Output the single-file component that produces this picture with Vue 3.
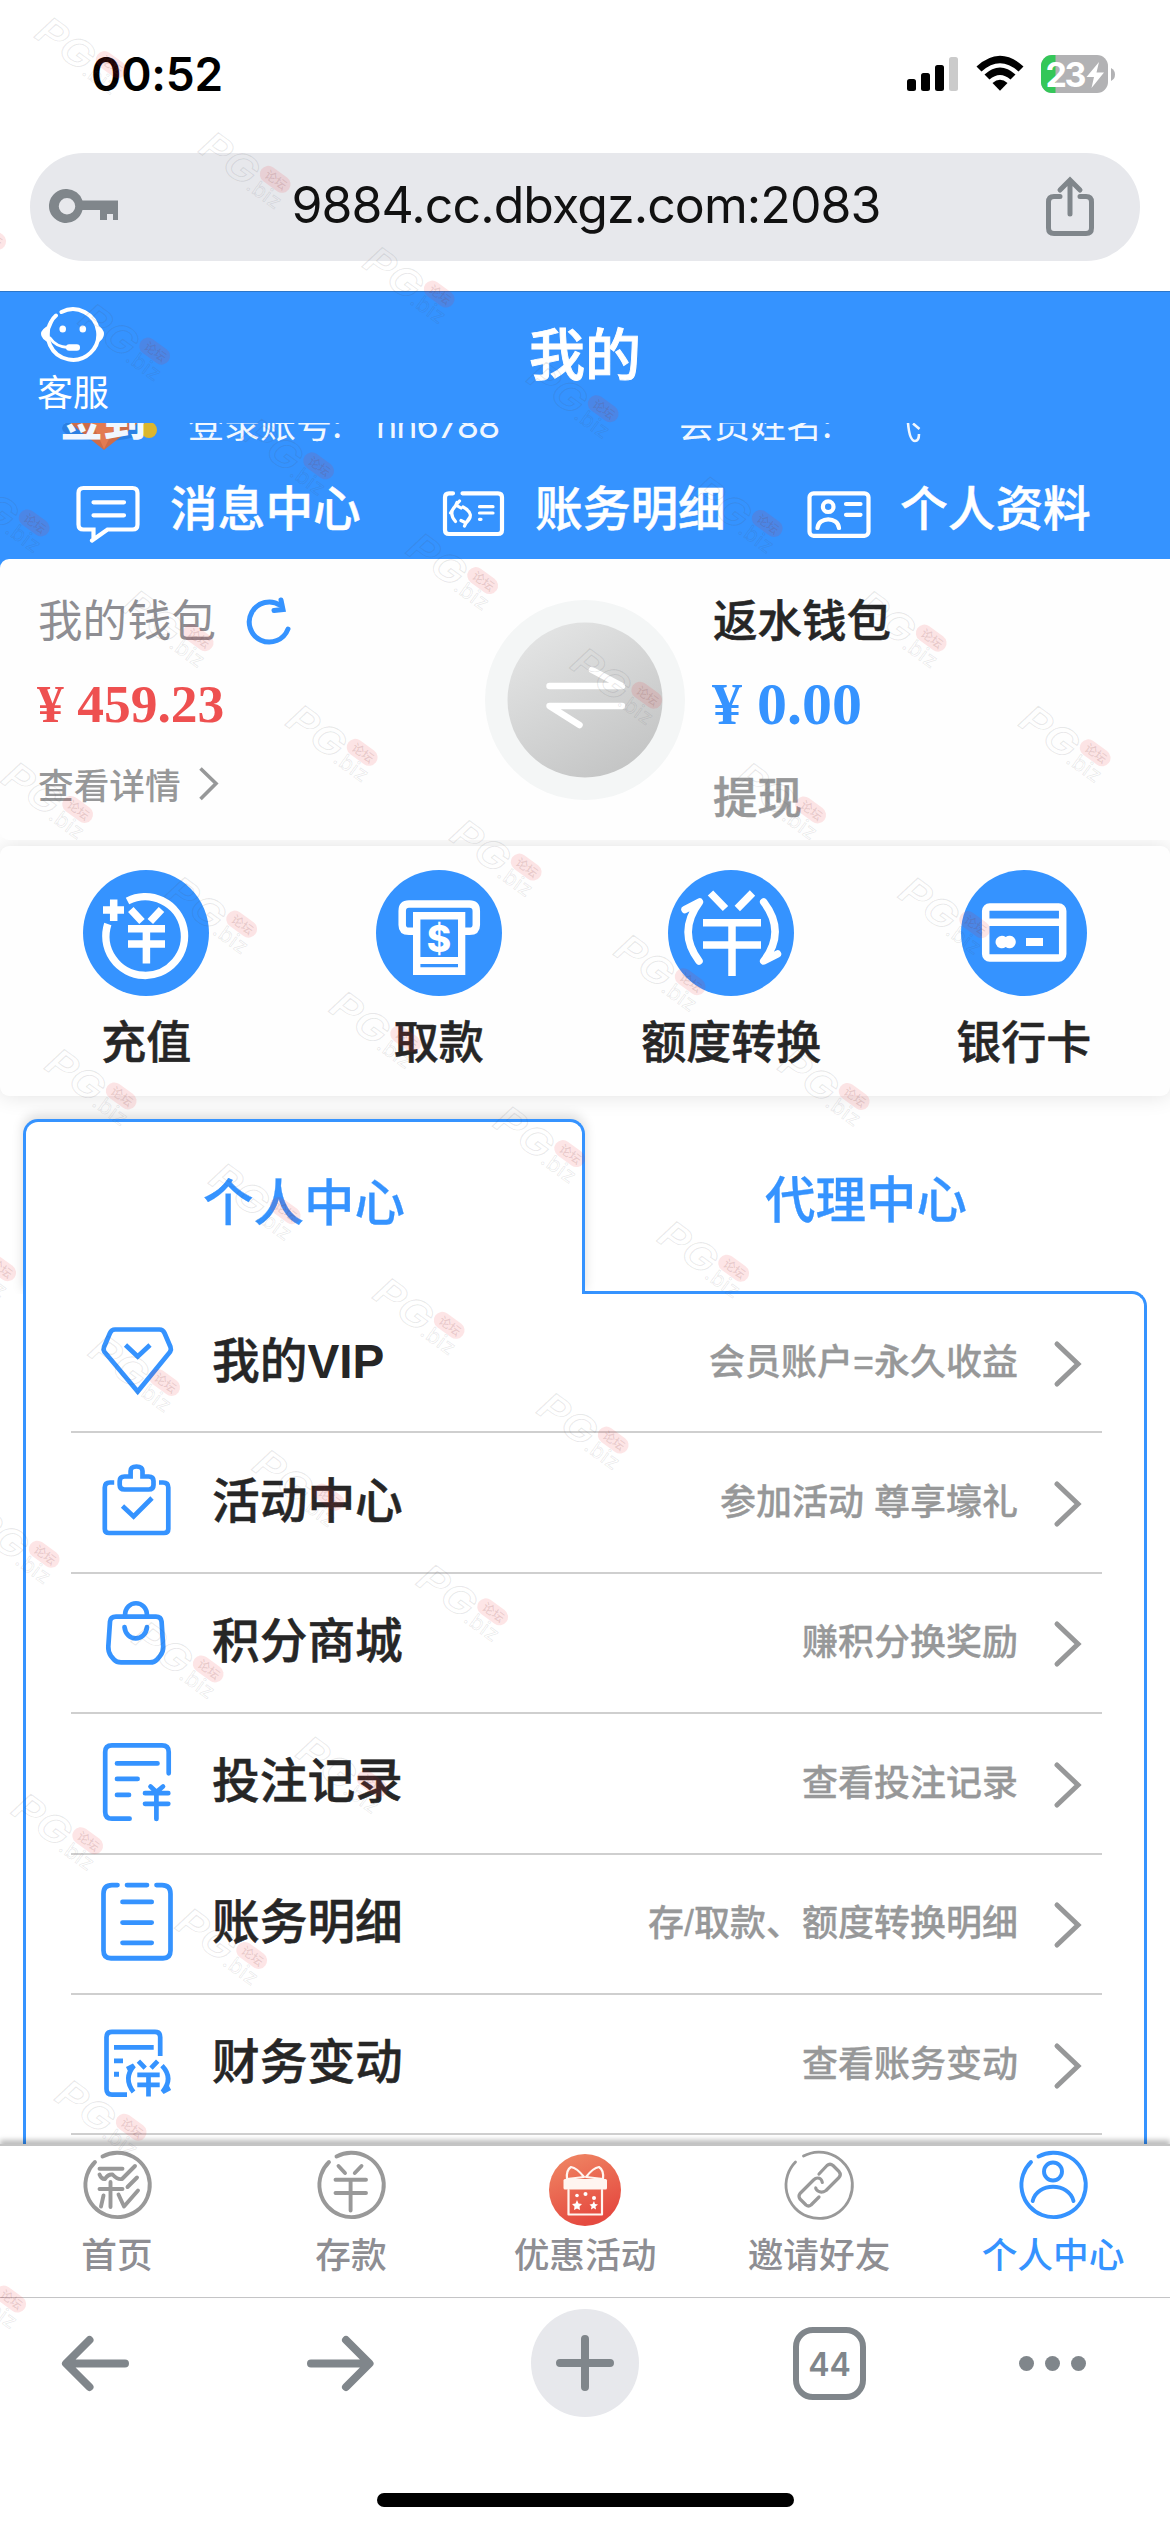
<script setup>
const actions = [
  { label: '充值' },
  { label: '取款' },
  { label: '额度转换' },
  { label: '银行卡' },
]

const rows = [
  {
    title: '我的',
    latin: 'VIP',
    note: '会员账户=永久收益',
    cap: 'butt',
    paths: [
      'M115 1329.5H159.500Q163 1329.500 164.500 1333L170.500 1347Q171.500 1349.500 170 1352L137.700 1391.500L104.500 1352Q103 1349.500 104 1347L110 1333Q111.500 1329.500 115 1329.500Z',
      'M125.500 1345L137.700 1356.500L150 1345',
    ],
  },
  {
    title: '活动中心',
    note: '参加活动 尊享壕礼',
    cap: 'butt',
    paths: [
      'M114.200 1482.500H110Q104.800 1482.500 104.800 1487.500V1529Q104.800 1533 109 1533H164Q168.300 1533 168.300 1529V1487.500Q168.300 1482.500 163 1482.500H159',
      'M124.500 1476.500H130.600V1471Q130.600 1466.500 136.500 1466.500T142.500 1471V1476.500H148.700Q153.500 1476.500 153.500 1481V1485Q153.500 1489.500 148.700 1489.500H124.500Q119.700 1489.500 119.700 1485V1481Q119.700 1476.500 124.500 1476.500Z',
      'M122.500 1506L133.600 1516.500L152 1498',
    ],
  },
  {
    title: '积分商城',
    note: '赚积分换奖励',
    cap: 'round',
    paths: [
      'M116 1617H156Q161 1617 161.600 1622L163.200 1647Q163.500 1652 160 1656.500L157 1660Q154.500 1662.800 150 1662.800H121Q116.500 1662.800 114 1660L111 1656.500Q108 1652 108.300 1647L110 1622Q110.500 1617 116 1617Z',
      'M125 1616C125 1599.500 147 1599.500 147 1616',
      'M124.500 1627.500C126 1642.500 145.500 1642.500 147 1627.500',
    ],
  },
  {
    title: '投注记录',
    note: '查看投注记录',
    cap: 'round',
    transform: 'matrix(1 0 0 1.0142 0 -23)',
    paths: [
      'M168.700 1771V1750Q168.700 1743.500 162 1743.500H112Q105.200 1743.500 105.200 1750V1809Q105.200 1815.700 112 1815.700H129.600',
      'M117 1761.200H157.500M117 1776.500H137.600M117 1792.300H129',
      'M145 1790.500H168.300M145 1801H168.300M156.400 1790V1816M150.500 1784L156.400 1789.500L163 1784',
    ],
  },
  {
    title: '账务明细',
    note: '存/取款、额度转换明细',
    cap: 'round',
    transform: 'matrix(1 0 0 1.0142 0 -23)',
    paths: [
      'M117.500 1881.500H112Q103.500 1881.500 103.500 1890V1946Q103.500 1953.700 111 1953.700H163Q170.500 1953.700 170.500 1946V1890Q170.500 1881.500 162 1881.500H156.500',
      'M127 1881.500H147M122.500 1898.200H151.700M122.500 1918.500H151.700M122.500 1938.500H151.700',
    ],
  },
  {
    title: '财务变动',
    note: '查看账务变动',
    cap: 'butt',
    transform: 'matrix(1 0 0 1.0142 0 -23)',
    paths: [
      'M160.200 2049.500V2031Q160.200 2025.800 155 2025.800H112Q106.500 2025.800 106.500 2031V2082Q106.500 2087.500 112 2087.500H127',
      'M114 2041H153.700M114 2054.200H123M114 2067.500H119',
      'M138.400 2054.500L145.200 2061.500M157.700 2054.500L151 2061.500M137.300 2068H159.700M137.300 2078H159.700M148.500 2068V2089.500',
      'M127 2062.500L134 2059Q123 2071.500 133.500 2085',
      'M162 2059Q174 2071.500 162.500 2085L170 2081',
    ],
  },
]

const tabs = [
  { label: '首页' },
  { label: '存款' },
  { label: '优惠活动' },
  { label: '邀请好友' },
  { label: '个人中心', active: true },
]

const rowBox = (i) => `97 ${i === 0 ? 1294 : 1434 + 140.4 * (i - 1)} 80 137`

const marks = []
for (let i = 0; i < 7; i++) {
  for (let j = 0; j < 13; j++) {
    const x = 33 + 164 * i - 120.5 * j
    const y = 14 + 114.7 * i + 171.8 * j
    if (x > -120) marks.push({ key: `${i}-${j}`, transform: `translate(${x} ${y}) rotate(36)` })
  }
}
</script>

<template>
  <main class="screen">
    <header class="status">
      <span class="clock">00:52</span>
      <svg class="status-icons" width="212" height="44" viewBox="905 52 212 44">
        <rect x="907" y="79" width="9" height="12" rx="2.500" />
        <rect x="921" y="73" width="9" height="18" rx="2.500" />
        <rect x="935" y="65" width="9" height="26" rx="2.500" />
        <rect x="949" y="57" width="9" height="34" rx="2.500" fill="#cbcbcb" />
        <path d="M976.500 66.500Q1000 45 1023.500 66.500L1018.500 71.500Q1000 55 981.500 71.500Z" />
        <path d="M984.500 74.500Q1000 60.500 1015.500 74.500L1010.500 79.500Q1000 70.500 989.500 79.500Z" />
        <path d="M992.500 83Q1000 76.500 1007.500 83L1000 90.800Z" />
        <clipPath id="cell"><rect x="1041" y="55" width="67" height="38" rx="11" /></clipPath>
        <g clip-path="url(#cell)">
          <rect x="1041" y="55" width="67" height="38" fill="#b2b2b4" />
          <rect x="1041" y="55" width="14.500" height="38" fill="#34c759" />
        </g>
        <path d="M1111 68Q1115 70 1115 74.500T1111 81Z" fill="#b2b2b4" />
        <text x="1045.500" y="86.500" class="charge">23</text>
        <path d="M1099 62L1086.500 77H1094L1091.500 88L1104 72.500H1096.500Z" fill="#fff" />
      </svg>
    </header>

    <div class="address">
      <svg width="72" height="44" viewBox="48 186 72 44" fill="#80868b">
        <path
          fill-rule="evenodd"
          d="M67 190A17 17 0 0 1 82.500 201.500H118V221H113V215H107V221H100V211H82.500A17 17 0 1 1 67 190ZM67 199A8.200 8.200 0 1 0 67 215.500A8.200 8.200 0 1 0 67 199Z"
        />
      </svg>
      <span class="url">9884.cc.dbxgz.com:2083</span>
      <svg width="54" height="64" viewBox="1043 174 54 64" class="share">
        <path d="M1060 195.500H1054Q1048.500 195.500 1048.500 201V227Q1048.500 232.500 1054 232.500H1086Q1091.500 232.500 1091.500 227V201Q1091.500 195.500 1086 195.500H1080" />
        <path d="M1070 213V180M1060 189L1070 179L1080 189" />
      </svg>
    </div>

    <section class="hero">
      <div class="hero-top">
        <div class="service">
          <svg width="66" height="60" viewBox="39 305 66 60">
            <g fill="none" stroke="#fff" stroke-width="4" stroke-linecap="round">
              <path d="M61.500 312A25.300 25.300 0 1 1 51 322Q52.500 318.500 56 315.500" />
              <path d="M50 338Q56 347 68 347.500" stroke-width="3" />
            </g>
            <g fill="#fff">
              <path d="M49.500 325V343Q41 339 41 334T49.500 325ZM97.500 325V343Q104 339 104 334T97.500 325Z" />
              <ellipse cx="62.700" cy="329" rx="3.300" ry="3.500" />
              <ellipse cx="82.800" cy="329" rx="3.300" ry="3.500" />
              <rect x="66" y="344.200" width="14" height="6.500" rx="3.200" />
            </g>
          </svg>
          <span>客服</span>
        </div>
        <h1>我的</h1>
      </div>

      <div class="account">
        <div class="badge">
          <svg width="110" height="40" viewBox="52 423 110 40">
            <ellipse cx="104" cy="428" rx="42" ry="13" fill="#1d62b5" opacity=".4" />
            <path d="M70 423H138L104 450Z" fill="#d96a3c" />
            <path d="M92 423H117L104 449Z" fill="#f07a45" />
            <circle cx="149" cy="430" r="8" fill="#e8b91f" />
          </svg>
          <span>签到</span>
        </div>
        <span class="login">登录账号:</span>
        <span class="user">hh6788</span>
        <span class="name">会员姓名:</span>
        <svg class="name-tail" width="20" height="22" viewBox="904 423 20 22">
          <path d="M908 423Q909.500 441 915 441Q919 441 919 434M913 423.500L919.500 429" fill="none" stroke="#fff" stroke-width="2.600" />
        </svg>
      </div>

      <nav class="links">
        <a>
          <svg width="66" height="60" viewBox="75.500 484 66 60">
            <path d="M94 538.500V529.500H84Q79 529.500 79 524.500V493Q79 488 84 488H133Q138 488 138 493V524.500Q138 529.500 133 529.500H108L92.500 540.500M94 502.300H124.500M94 515.300H124.500" />
          </svg>
          <span>消息中心</span>
        </a>
        <a>
          <svg width="66" height="60" viewBox="441 484 66 60">
            <path d="M454 493.300H450Q446 493.300 446 497.500V530Q446 534 450 534H499Q503 534 503 530V497.500Q503 493.300 499 493.300H463.500" />
            <path d="M480.500 506.700H494M480.500 513H494M480.500 519.300H482" stroke-width="3.200" />
            <path d="M458 502.500L456.500 506Q449 513 456.500 521.500M451.500 513L454 509M464 507Q477 514 467 523L465.500 526M471 517L467 523L462 520.500M460.500 501L457 505L462 508" stroke-width="3.200" />
          </svg>
          <span>账务明细</span>
        </a>
        <a>
          <svg width="66" height="60" viewBox="805.500 484 66 60">
            <rect x="810" y="493.300" width="59" height="42.500" rx="4" />
            <circle cx="828.700" cy="506.700" r="5.300" />
            <path d="M818 528C819 516.500 838.500 516.500 839.500 528M846.500 504H861M846.500 514.800H861" />
          </svg>
          <span>个人资料</span>
        </a>
      </nav>
    </section>

    <section class="wallets">
      <div class="wallet mine">
        <div class="wallet-name">
          <span>我的钱包</span>
          <svg width="48" height="52" viewBox="243 594 48 52">
            <path d="M278.500 605.500A20 20 0 1 0 286 629" />
            <path d="M279 600L281 609.500L272 610.500" />
          </svg>
        </div>
        <div class="amount red">¥ 459.23</div>
        <div class="detail">
          <span>查看详情</span>
          <svg width="24" height="40" viewBox="197 766 24 40"><path d="M200.500 771.500L216 786.500L200.500 802" /></svg>
        </div>
      </div>
      <div class="swap">
        <svg width="200" height="200" viewBox="485 600 200 200">
          <defs>
            <linearGradient id="disc" x1=".2" y1="0" x2=".8" y2="1">
              <stop offset="0" stop-color="#e4e5e5" />
              <stop offset="1" stop-color="#c2c3c3" />
            </linearGradient>
          </defs>
          <circle cx="585" cy="700" r="100" fill="#f4f6f6" />
          <circle cx="585" cy="700" r="77.500" fill="url(#disc)" />
          <path d="M549.500 686H622L592 670M622 706H549.500L579.500 725" fill="none" stroke="#fff" stroke-width="6.500" stroke-linecap="round" stroke-linejoin="round" />
        </svg>
      </div>
      <div class="wallet rebate">
        <div class="wallet-name"><span>返水钱包</span></div>
        <div class="amount blue">¥ 0.00</div>
        <div class="withdraw">提现</div>
      </div>
    </section>

    <section class="actions">
      <a v-for="(item, i) in actions" :key="item.label">
        <svg v-if="i === 0" width="126" height="126" viewBox="83 870 126 126">
          <circle cx="146" cy="933" r="63" />
          <path d="M127.500 901A39.300 39.300 0 1 1 107.800 924M103 910H124M113.700 899.500V921M130.800 909.500L142 921.500M161.500 909.500L150.300 921.500M128 928.800H165M128 944H165M146.400 929V963.500" />
        </svg>
        <svg v-else-if="i === 1" width="126" height="126" viewBox="375 870 126 126">
          <circle cx="438" cy="933" r="63" />
          <path d="M415 931.300H408Q401.200 931.300 401.200 925V911Q401.200 904 408 904H468.500Q475.300 904 475.300 911V925Q475.300 931.300 468.500 931.300H462" />
          <path d="M412 912H464.300V975H412ZM419.400 919.500V957H457V919.500ZM419.400 964V967.200H457V964Z" class="solid" />
          <text x="438" y="951.500" class="dollar">$</text>
        </svg>
        <svg v-else-if="i === 2" width="126" height="126" viewBox="668 870 126 126">
          <circle cx="731" cy="933" r="63" />
          <path d="M710.500 893L725.500 908.500M752.500 893L737.300 908.500M703 922.800H761M703 945H761M732 923V976" />
          <path d="M685 909.500L699.500 902Q677 932 699 961M763.700 902Q786.500 932 763.700 961L777.500 954" class="round" />
        </svg>
        <svg v-else width="126" height="126" viewBox="960 870 126 126">
          <circle cx="1023" cy="933" r="63" />
          <rect x="984.700" y="907" width="77" height="51" rx="4" />
          <path d="M985 922.200H1061" />
          <path d="M1025 938H1042V946H1025ZM1001 935.700A6.300 6.300 0 0 1 1004.700 937A6.300 6.300 0 1 1 1004.700 947A6.300 6.300 0 1 1 1001 935.700Z" class="solid" />
        </svg>
        <span>{{ item.label }}</span>
      </a>
    </section>

    <section class="center">
      <div class="tabs">
        <div class="tab current">个人中心</div>
        <div class="tab">代理中心</div>
      </div>
      <div class="panel">
        <a v-for="(row, i) in rows" :key="row.title" class="row">
          <svg class="row-icon" width="80" height="137" :viewBox="rowBox(i)" :stroke-linecap="row.cap">
            <g :transform="row.transform">
              <path v-for="d in row.paths" :key="d" :d="d" />
            </g>
          </svg>
          <span class="title">{{ row.title }}<b v-if="row.latin">{{ row.latin }}</b></span>
          <span class="note">{{ row.note }}</span>
          <svg class="more" width="32" height="50" viewBox="0 0 32 50"><path d="M5 5L26 25L5 45" /></svg>
        </a>
      </div>
    </section>

    <nav class="tabbar">
      <a v-for="(tab, i) in tabs" :key="tab.label" :class="{ active: tab.active }">
        <svg v-if="i === 0" width="74" height="78" viewBox="79.500 2149 74 78">
          <path d="M102 2156.500A32.200 32.200 0 1 1 94.500 2162" />
          <path d="M99 2168.700H122M99 2174.500Q101 2179.500 104.500 2179Q107.500 2174 112 2174.500Q117 2180 121.500 2179L134.500 2166M99 2189H122M110 2182V2207M103 2195.500L100.500 2206.500M118 2194.500L123.500 2206.500L137.500 2190.500M136.500 2177.500L127 2187" />
        </svg>
        <svg v-else-if="i === 1" width="74" height="78" viewBox="314 2149 74 78">
          <path d="M336.500 2156.500A32.200 32.200 0 1 1 329 2162" />
          <path d="M338.500 2166L345 2173M361.500 2166L354.800 2173M335.500 2179.800H366M335.500 2193H366M350.600 2180V2210.500" />
        </svg>
        <svg v-else-if="i === 2" width="74" height="78" viewBox="548 2149 74 78" class="gift">
          <defs>
            <linearGradient id="gift" x1="0" y1="0" x2=".4" y2="1">
              <stop offset="0" stop-color="#f08a66" />
              <stop offset="1" stop-color="#e54a40" />
            </linearGradient>
          </defs>
          <circle cx="585" cy="2190" r="36" fill="url(#gift)" />
          <rect x="563.500" y="2179" width="43.500" height="10.500" rx="1.500" fill="#fff5f0" />
          <path d="M568.500 2190V2214.500H602V2190M584 2177L567 2179Q566 2170 571 2167Q577 2168 584 2177ZM586 2177L603 2179Q604 2170 599 2167Q593 2168 586 2177Z" fill="none" stroke="#fff5f0" stroke-width="2.200" />
          <path d="M577 2200L578.500 2203.500L582 2204L579.500 2206.500L580 2210L577 2208.500L574 2210L574.500 2206.500L572 2204L575.500 2203.500ZM594 2201L595 2204L598 2204.500L595.500 2206.500L596 2209.500L593.500 2208L591 2209.500L591.500 2206.500L589.500 2204.500L592.500 2204Z" fill="#fff" />
          <circle cx="577" cy="2195.500" r="1.800" fill="#fff" />
          <circle cx="585.500" cy="2194" r="2" fill="#fff" />
          <circle cx="594" cy="2198" r="2" fill="#fff" />
        </svg>
        <svg v-else-if="i === 3" width="74" height="78" viewBox="781.500 2149 74 78">
          <path d="M803 2156A33.200 33.200 0 1 1 795 2162" stroke-width="2.800" />
          <path d="M818.500 2174L826.500 2165.500Q829.500 2163 832.500 2165.500L838.500 2171.500Q841 2174.500 838.500 2177.500L825.500 2190.500Q821 2193.500 817.500 2191Q815 2189 815.300 2188M821.800 2182.500Q821 2178 817 2178Q815 2178 813 2180L799.500 2193.500Q797.500 2196 799.500 2199L805.500 2205Q808 2207 810.500 2205L818.500 2197" stroke-width="3.200" />
        </svg>
        <svg v-else width="74" height="78" viewBox="1015 2149 74 78">
          <path d="M1037.500 2156.500A32.200 32.200 0 1 1 1030 2162" />
          <circle cx="1052" cy="2171.500" r="9" />
          <path d="M1031.700 2201C1036 2182 1068 2182 1072.500 2201" />
        </svg>
        <span>{{ tab.label }}</span>
      </a>
    </nav>

    <nav class="toolbar">
      <svg width="74" height="66" viewBox="58 2330 74 66"><path d="M125 2363.500H67M89.500 2340L66 2363.500L89.500 2387" /></svg>
      <svg class="forward" width="74" height="66" viewBox="303 2330 74 66"><path d="M311 2363.500H368M346 2340L369.500 2363.500L346 2387" /></svg>
      <div class="plus"><svg width="66" height="66" viewBox="0 0 66 66"><path d="M33 9V57M8 33H58" /></svg></div>
      <div class="count">44</div>
      <div class="dots"><i></i><i></i><i></i></div>
    </nav>
    <div class="home"></div>

    <svg class="marks" width="1170" height="2532" viewBox="0 0 1170 2532" aria-hidden="true">
      <g v-for="m in marks" :key="m.key" :transform="m.transform">
        <text x="13" y="18.500" class="mark-big" textLength="62" lengthAdjust="spacingAndGlyphs">PG</text>
        <rect x="76" y="-13.500" width="34" height="17" rx="8.500" />
        <text x="82" y="-0.500" class="mark-cn">论坛</text>
        <text x="74" y="20" class="mark-small">.biz</text>
      </g>
    </svg>
  </main>
</template>

<style>
body {
  background: #fff;
}
</style>

<style scoped>
.screen {
  position: relative;
  width: 1170px;
  height: 2532px;
  overflow: hidden;
  background: #fff;
  color: #262626;
  font-family: Inter, 'Noto Sans CJK SC', sans-serif;
  font-weight: 500;
}
svg {
  display: block;
  flex: none;
}
.status {
  display: flex;
  justify-content: space-between;
  align-items: flex-start;
  box-sizing: border-box;
  height: 153px;
  padding: 52px 53px 0 91px;
}
.clock {
  font-size: 46px;
  line-height: 45px;
  font-weight: 600;
  letter-spacing: -0.2px;
  color: #000;
}
.charge {
  font-size: 34px;
  font-weight: 700;
  letter-spacing: -2.5px;
  fill: #fff;
}
.address {
  display: flex;
  align-items: center;
  justify-content: space-between;
  box-sizing: border-box;
  width: 1110px;
  height: 108px;
  margin: 0 auto;
  padding: 0 43px 0 18px;
  border-radius: 54px;
  background: #e7e8ec;
}
.url {
  margin: -4px 0 0 9px;
  color: #111;
  font-size: 50px;
  font-weight: 400;
  letter-spacing: -0.9px;
  line-height: 60px;
}
.share path {
  fill: none;
  stroke: #80868b;
  stroke-width: 5;
  stroke-linecap: round;
}
.hero {
  box-sizing: border-box;
  height: 268px;
  margin-top: 30px;
  border-top: 1px solid #2c76c9;
  background: #3593ff;
  color: #fff;
}
.hero-top {
  display: grid;
  grid-template-columns: 146px 1fr 146px;
  height: 131px;
}
.service {
  display: flex;
  flex-direction: column;
  align-items: center;
  padding-top: 13px;
}
.service svg {
  margin-left: -2px;
}
.service span {
  margin-top: 8px;
  font-size: 36px;
  font-weight: 400;
  line-height: 40px;
}
h1 {
  margin: 33px 0 0;
  text-align: center;
  font-size: 56px;
  font-weight: 500;
  line-height: 60px;
  -webkit-text-stroke: 0.9px currentColor;
}
.account {
  display: flex;
  align-items: flex-start;
  height: 48px;
  overflow: hidden;
  font-size: 36px;
  line-height: 36px;
  font-weight: 400;
  opacity: 0.93;
}
.account > span {
  margin-top: -16px;
  white-space: pre;
}
.badge {
  display: grid;
  width: 110px;
  margin-left: 52px;
}
.badge svg,
.badge span {
  grid-area: 1 / 1;
}
.badge span {
  margin: -25px 0 0 8px;
  font-size: 43px;
  font-weight: 900;
  line-height: 44px;
}
.login {
  width: 188px;
  margin-left: 26px;
}
.user {
  width: 302px;
  letter-spacing: -1px;
}
.name {
  width: 226px;
}
.links {
  display: flex;
  padding-left: 75px;
}
.links a {
  display: flex;
  align-items: center;
  height: 76px;
  width: 366px;
}
.links svg {
  fill: none;
  stroke: #fff;
  stroke-width: 4.2;
  stroke-linecap: round;
  margin-top: 9px;
}
.links span {
  margin-left: 29px;
  font-size: 47.700px;
  line-height: 76px;
  -webkit-text-stroke: 0.5px currentColor;
}
.wallets {
  display: grid;
  grid-template-columns: 485px 200px 485px;
  height: 281px;
  background: linear-gradient(#3593ff 12px, #fff 12px);
}
.wallet {
  background: #fefefe;
}
.swap {
  padding-top: 41px;
  background: #fefefe;
}
.mine {
  padding-left: 38px;
  border-radius: 9px 0 0 9px;
}
.rebate {
  padding-left: 28px;
}
.wallet-name {
  display: flex;
  align-items: center;
  height: 60px;
  margin-top: 31px;
  font-size: 44.500px;
}
.wallet-name span {
  margin-top: -6px;
}
.rebate .wallet-name,
.withdraw {
  -webkit-text-stroke: 0.5px currentColor;
}
.mine .wallet-name {
  color: #8e8e93;
  font-weight: 400;
}
.wallet-name svg {
  margin-left: 29px;
  fill: none;
  stroke: #3593ff;
  stroke-width: 5;
  stroke-linecap: round;
}
.amount {
  height: 60px;
  margin: 24px 0 0 -1px;
  font-family: 'Liberation Serif', serif;
  font-size: 53.500px;
  font-weight: 700;
  line-height: 60px;
}
.red {
  color: #ee5050;
}
.blue {
  color: #3593ff;
  font-size: 60px;
}
.detail {
  display: flex;
  align-items: center;
  height: 44px;
  margin-top: 27px;
  color: #979899;
  font-size: 35.700px;
}
.detail svg {
  margin-left: 16px;
  fill: none;
  stroke: #979899;
  stroke-width: 3.600;
}
.withdraw {
  margin-top: 34px;
  color: #979899;
  font-size: 44.500px;
  line-height: 60px;
}
.actions {
  display: grid;
  grid-template-columns: repeat(4, 1fr);
  height: 250px;
  margin-top: 6px;
  border-radius: 9px;
  background: #fefefe;
  box-shadow: 0 0 22px rgba(0, 0, 0, 0.12);
}
.actions a {
  display: flex;
  flex-direction: column;
  align-items: center;
  padding-top: 24px;
}
.actions circle {
  fill: #3593ff;
  stroke: none;
}
.actions svg {
  fill: none;
  stroke: #fff;
  stroke-width: 7.500;
}
.actions .round {
  stroke-linecap: round;
  stroke-linejoin: round;
}
.actions .solid {
  fill: #fff;
  fill-rule: evenodd;
  stroke: none;
}
.actions .dollar {
  fill: #fff;
  stroke: none;
  font-size: 37px;
  font-weight: 800;
  text-anchor: middle;
}
.actions span {
  margin-top: 17px;
  font-size: 45px;
  line-height: 60px;
  -webkit-text-stroke: 0.5px currentColor;
}
.center {
  height: 1025px;
  margin: 23px 23px 0;
}
.tabs {
  display: flex;
  height: 172px;
}
.tab {
  box-sizing: border-box;
  width: 562px;
  padding-top: 55px;
  color: #3593ff;
  font-size: 50.500px;
  line-height: 52px;
  text-align: center;
  -webkit-text-stroke: 0.3px currentColor;
}
.tab.current {
  position: relative;
  z-index: 1;
  height: 175px;
  border: 3px solid #3593ff;
  border-bottom: 0;
  border-radius: 15px 15px 0 0;
  background: #fff;
  box-shadow: 0 -4px 12px rgba(0, 0, 0, 0.14);
  clip-path: inset(-20px -20px 0 -20px);
}
.panel {
  box-sizing: border-box;
  height: 853px;
  padding: 0 42px 0 45px;
  border: 3px solid #3593ff;
  border-bottom: 0;
  border-top-right-radius: 15px;
  background: #fff;
}
.row {
  display: flex;
  align-items: center;
  box-sizing: border-box;
  height: 140.400px;
  padding: 0 18px 0 26px;
  border-bottom: 2px solid #cfcfcf;
}
.row:first-child {
  height: 139.400px;
}
.row-icon {
  fill: none;
  stroke: #3593ff;
  stroke-width: 4.700;
}
.title {
  margin: -4px 0 0 35px;
  font-size: 47.700px;
  line-height: 60px;
  -webkit-text-stroke: 0.5px currentColor;
}
.title b {
  font-family: 'Liberation Sans', sans-serif;
  font-weight: 700;
  line-height: 1;
  -webkit-text-stroke: 0;
}
.note {
  flex: 1;
  margin-top: 1px;
  text-align: right;
  color: #979899;
  font-family: 'Liberation Sans', 'Noto Sans CJK SC', sans-serif;
  font-size: 36px;
  line-height: 50px;
  -webkit-text-stroke: 0.3px currentColor;
}
.more {
  margin-left: 34px;
  margin-top: 3px;
  fill: none;
  stroke: #979899;
  stroke-width: 5;
  stroke-linecap: round;
}
.tabbar {
  position: relative;
  display: grid;
  grid-template-columns: repeat(5, 1fr);
  box-sizing: border-box;
  height: 154px;
  border-top: 2px solid #c4c4c4;
  border-bottom: 1px solid #c4c4c6;
  background: #fff;
  box-shadow: 0 -4px 5px rgba(0, 0, 0, 0.26);
}
.tabbar a {
  display: flex;
  flex-direction: column;
  align-items: center;
  padding-top: 3px;
  color: #8e8e93;
}
.tabbar svg {
  fill: none;
  stroke: #999;
  stroke-width: 3.900;
  stroke-linecap: round;
  stroke-linejoin: round;
}
.tabbar .gift {
  stroke: none;
}
.tabbar .active {
  color: #3593ff;
}
.tabbar .active svg {
  stroke: #3593ff;
}
.tabbar span {
  margin-top: 3px;
  font-size: 35.700px;
  line-height: 50px;
}
.toolbar {
  display: flex;
  align-items: center;
  box-sizing: border-box;
  height: 108px;
  margin-top: 11px;
  padding-left: 58px;
}
.toolbar svg {
  fill: none;
  stroke: #80868b;
  stroke-width: 8;
  stroke-linecap: round;
  stroke-linejoin: round;
}
.toolbar .forward {
  margin-left: 171px;
}
.plus {
  display: grid;
  place-items: center;
  width: 108px;
  height: 108px;
  margin-left: 154px;
  border-radius: 50%;
  background: #e7e8ec;
}
.count {
  box-sizing: border-box;
  width: 73px;
  height: 73px;
  margin-left: 154px;
  border: 6px solid #80868b;
  border-radius: 20px;
  color: #80868b;
  font-size: 32px;
  font-weight: 600;
  line-height: 64px;
  text-align: center;
}
.dots {
  display: flex;
  gap: 11px;
  margin-left: 153px;
}
.dots i {
  width: 15px;
  height: 15px;
  border-radius: 50%;
  background: #80868b;
}
.home {
  width: 417px;
  height: 14px;
  margin: 76px auto 0;
  border-radius: 7px;
  background: #000;
}
.marks {
  position: absolute;
  inset: 0;
  z-index: 5;
  pointer-events: none;
}
.marks rect {
  fill: rgba(240, 40, 50, 0.12);
}
.mark-big {
  font-size: 38px;
  font-weight: 600;
  font-style: italic;
  fill: rgba(0, 0, 0, 0.012);
  stroke: rgba(80, 80, 90, 0.13);
  stroke-width: 1px;
}
.mark-cn {
  font-size: 12px;
  fill: rgba(120, 60, 60, 0.16);
}
.mark-small {
  font-size: 21px;
  font-weight: 400;
  letter-spacing: 0.5px;
  fill: none;
  stroke: rgba(80, 80, 90, 0.12);
  stroke-width: 0.8px;
}
</style>
